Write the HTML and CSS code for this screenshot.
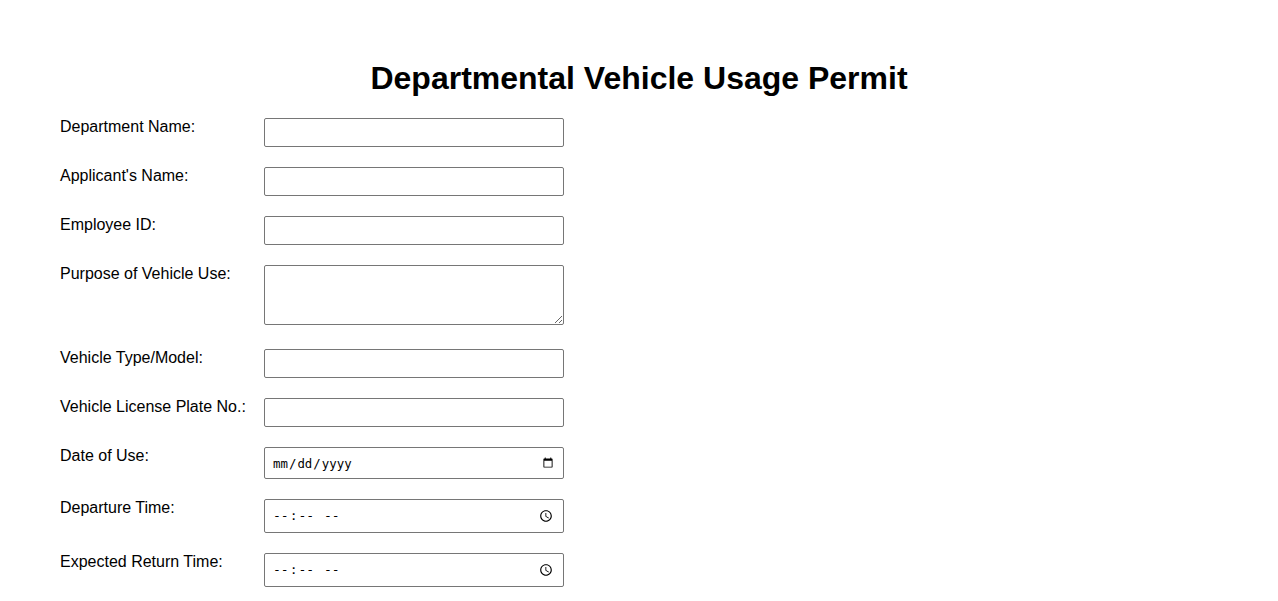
FILE: index.html
```html
<!DOCTYPE html>
<html lang="en">
<head>
<meta charset="utf-8">
<title>Departmental Vehicle Usage Permit</title>
<link rel="stylesheet" href="styles.css">
</head>
<body>
<main class="page">
  <h1 class="title">Departmental Vehicle Usage Permit</h1>
  <form class="form">
    <div class="row"><label class="label" for="dept">Department Name:</label><input class="field" id="dept" type="text"></div>
    <div class="row"><label class="label" for="app">Applicant's Name:</label><input class="field" id="app" type="text"></div>
    <div class="row"><label class="label" for="emp">Employee ID:</label><input class="field" id="emp" type="text"></div>
    <div class="row row-area"><label class="label" for="purpose">Purpose of Vehicle Use:</label><textarea class="field area" id="purpose"></textarea></div>
    <div class="row"><label class="label" for="vtype">Vehicle Type/Model:</label><input class="field" id="vtype" type="text"></div>
    <div class="row"><label class="label" for="plate">Vehicle License Plate No.:</label><input class="field" id="plate" type="text"></div>
    <div class="row"><label class="label" for="date">Date of Use:</label><input class="field date" id="date" type="date"></div>
    <div class="row"><label class="label" for="dep">Departure Time:</label><input class="field time" id="dep" type="time"></div>
    <div class="row"><label class="label" for="ret">Expected Return Time:</label><input class="field time" id="ret" type="time"></div>
  </form>
</main>
</body>
</html>
```

FILE: styles.css
```css
html, body {
  margin: 0;
  padding: 0;
  background: #ffffff;
}
body {
  font-family: "Liberation Sans", Arial, sans-serif;
  color: #000;
}
.page {
  padding: 38px 60px 0 60px;
}
.title {
  font-size: 32px;
  font-weight: bold;
  text-align: center;
  margin: 22px 0 21px 0;
  line-height: 37px;
}
.form {
  display: flex;
  flex-direction: column;
}
.row {
  display: flex;
  align-items: flex-start;
  margin-bottom: 20px;
}
.row-area {
  margin-bottom: 24px;
}
.label {
  width: 204px;
  flex: none;
  font-size: 16px;
  line-height: 18px;
}
.field {
  box-sizing: border-box;
  width: 300px;
  height: 29px;
  margin: 0;
  padding: 6px;
  border: 1px solid #767676;
  border-radius: 2px;
  background: #fff;
  font-family: "Liberation Sans", Arial, sans-serif;
  font-size: 13.33px;
}
.area {
  height: 60px;
  resize: both;
}
.date {
  height: 32px;
  padding: 6px 7px;
  font-family: "DejaVu Sans Mono", monospace;
  font-size: 12.4px;
}
.time {
  height: 34px;
  padding: 6px 7px;
  font-family: "DejaVu Sans Mono", monospace;
  font-size: 13px;
}
```
